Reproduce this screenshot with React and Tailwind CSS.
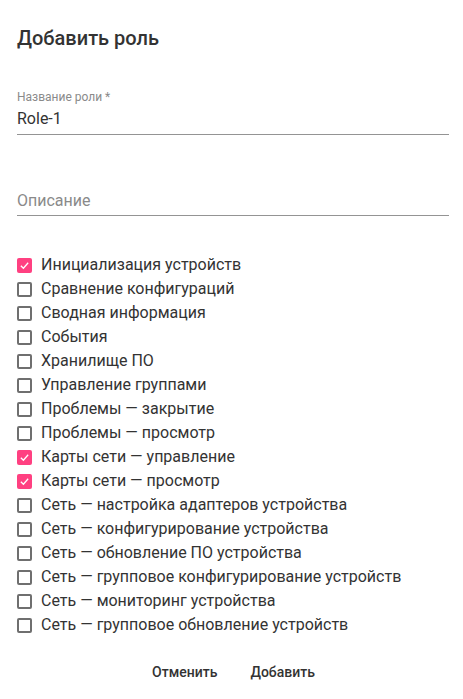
const PERMISSIONS = [
  { label: 'Инициализация устройств', checked: true },
  { label: 'Сравнение конфигураций', checked: false },
  { label: 'Сводная информация', checked: false },
  { label: 'События', checked: false },
  { label: 'Хранилище ПО', checked: false },
  { label: 'Управление группами', checked: false },
  { label: 'Проблемы — закрытие', checked: false },
  { label: 'Проблемы — просмотр', checked: false },
  { label: 'Карты сети — управление', checked: true },
  { label: 'Карты сети — просмотр', checked: true },
  { label: 'Сеть — настройка адаптеров устройства', checked: false },
  { label: 'Сеть — конфигурирование устройства', checked: false },
  { label: 'Сеть — обновление ПО устройства', checked: false },
  { label: 'Сеть — групповое конфигурирование устройств', checked: false },
  { label: 'Сеть — мониторинг устройства', checked: false },
  { label: 'Сеть — групповое обновление устройств', checked: false },
];

function Box({ checked }) {
  if (checked) {
    return (
      <span className="flex h-[15px] w-[15px] shrink-0 items-center justify-center rounded-[2px] bg-[#ff4081]">
        <svg width="11" height="11" viewBox="0 0 12 12" fill="none">
          <path d="M2 6.3 L4.8 9 L10 3" stroke="white" strokeWidth="1.4" />
        </svg>
      </span>
    );
  }
  return <span className="h-[15px] w-[15px] shrink-0 rounded-[2px] border-2 border-[#6f6f6f]" />;
}

export default function App() {
  return (
    <div className="min-h-screen bg-white pl-[17px] pr-[14px] pt-[26px] font-['Roboto',sans-serif] text-[#333]">
      <h2 className="text-[20px] leading-[24px] font-medium text-[#333]">Добавить роль</h2>

      <div className="mt-[40px]">
        <div className="text-[12px] leading-[14px] text-[#8a8a8a]">Название роли *</div>
        <div className="mt-[5px] border-b border-[#949494] pb-[5px] text-[16px] leading-[20px] text-[#333]">Role-1</div>
      </div>

      <div className="mt-[56px] border-b border-[#949494] pb-[4px] text-[16px] leading-[20px] text-[#8a8a8a]">
        Описание
      </div>

      <div className="mt-[37px]">
        {PERMISSIONS.map((p) => (
          <div key={p.label} className="flex h-[24px] items-center gap-[9px]">
            <Box checked={p.checked} />
            <span className="text-[16px] leading-[20px] text-[#333]">{p.label}</span>
          </div>
        ))}
      </div>

      <div className="mt-[25px] flex justify-center gap-[33px] pl-[1px] text-[14px] leading-[20px] font-medium text-[#333]">
        <button>Отменить</button>
        <button>Добавить</button>
      </div>
    </div>
  );
}
